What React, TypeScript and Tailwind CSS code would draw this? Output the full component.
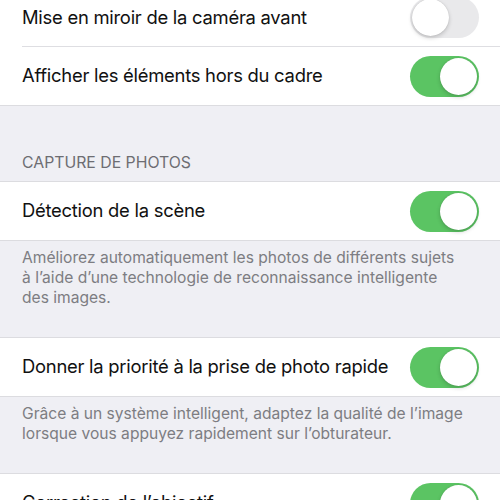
const font = { fontFamily: 'Inter, "Noto Sans", sans-serif' }

function Toggle({ on }: { on: boolean }) {
  return (
    <div
      className={`flex h-[41px] w-[69px] shrink-0 items-center rounded-full p-[2px] ${
        on ? 'justify-end bg-[#5bc463]' : 'justify-start bg-[#e9e9eb]'
      }`}
    >
      <div className="h-[37px] w-[37px] rounded-full bg-white shadow-[0_2px_4px_rgba(0,0,0,0.18),0_0_1px_rgba(0,0,0,0.2)]" />
    </div>
  )
}

function Row({ label, on, divider }: { label: string; on: boolean; divider?: boolean }) {
  return (
    <div className="flex h-[58px] items-center bg-white pl-[22px]">
      <div
        className={`flex h-full flex-1 items-center justify-between pr-[21px] ${
          divider ? 'border-b border-[#dedee2]' : ''
        }`}
      >
        <span className="text-[18.4px] tracking-[-0.25px] text-[#111111]">{label}</span>
        <Toggle on={on} />
      </div>
    </div>
  )
}

function Footer({ children }: { children: React.ReactNode }) {
  return (
    <div className="border-y border-[#dcdce0] px-[22px] pb-[29px] pt-[7px] text-[15.6px] leading-[20px] text-[#7d7d82]">
      {children}
    </div>
  )
}

export default function App() {
  return (
    <div className="h-[500px] overflow-hidden bg-[#efeff4]" style={font}>
      <div className="-mt-[11px]">
        {/* Camera group */}
        <div className="border-b border-[#dcdce0]">
          <Row label="Mise en miroir de la caméra avant" on={false} divider />
          <Row label="Afficher les éléments hors du cadre" on />
        </div>

        {/* Section header */}
        <div className="px-[22px] pb-[8px] pt-[47px] text-[15.8px] leading-[20px] text-[#6d6d72]">
          CAPTURE DE PHOTOS
        </div>

        <div className="border-t border-[#dcdce0]">
          <Row label="Détection de la scène" on />
        </div>
        <Footer>
          Améliorez automatiquement les photos de différents sujets
          <br />à l’aide d’une technologie de reconnaissance intelligente
          <br />
          des images.
        </Footer>

        <Row label="Donner la priorité à la prise de photo rapide" on />
        <Footer>
          Grâce à un système intelligent, adaptez la qualité de l’image
          <br />
          lorsque vous appuyez rapidement sur l’obturateur.
        </Footer>

        <Row label="Correction de l’objectif" on />
      </div>
    </div>
  )
}
